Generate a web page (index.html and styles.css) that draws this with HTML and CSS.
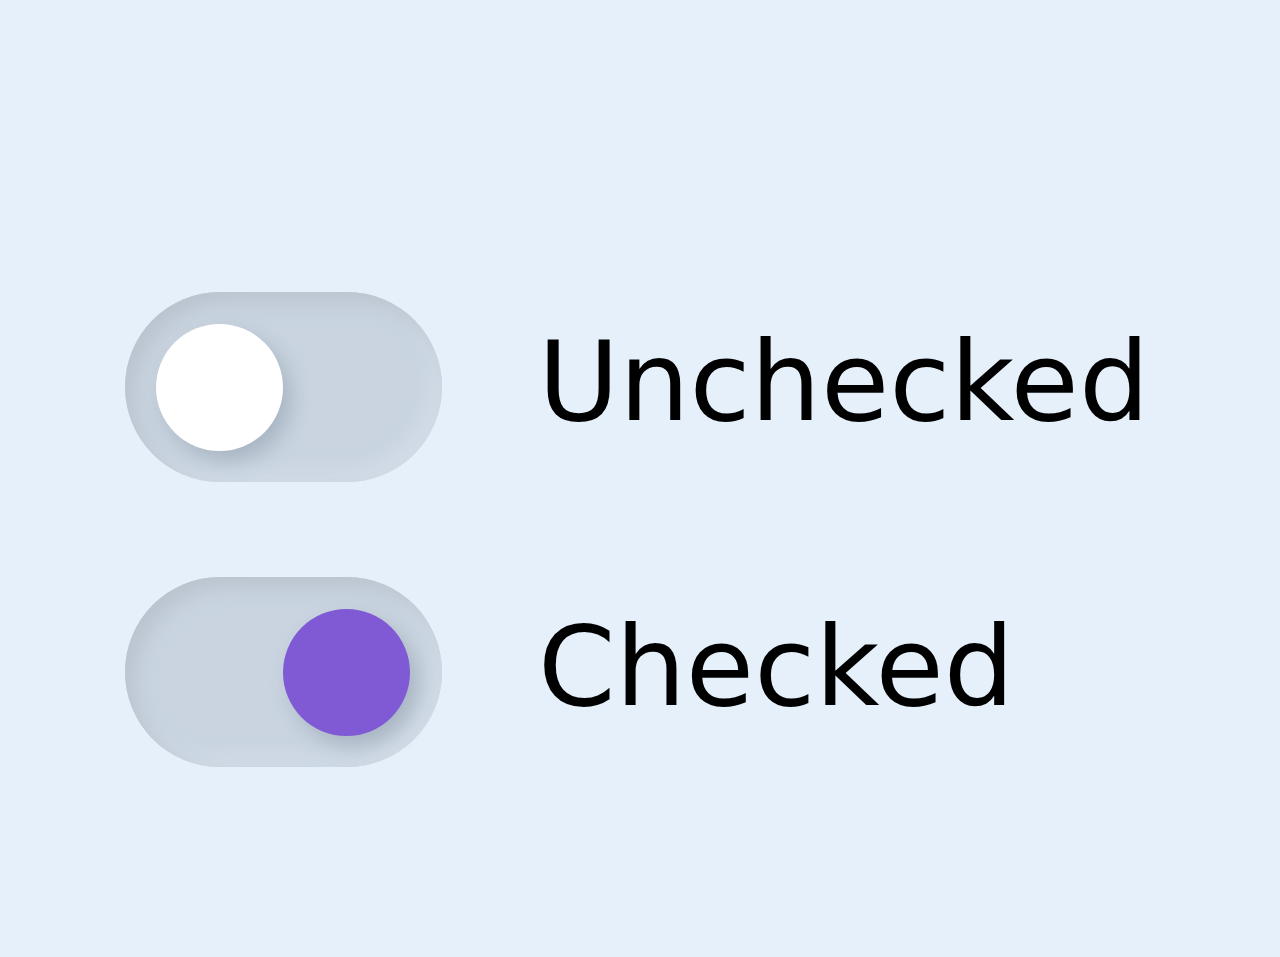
FILE: index.html
```html
<!DOCTYPE html>
<html lang="en">
<head>
<meta charset="utf-8">
<title>Switches</title>
<link rel="stylesheet" href="styles.css">
</head>
<body>
<main class="list">
  <label class="row">
    <span class="track"><span class="knob"></span></span>
    <span class="label">Unchecked</span>
  </label>
  <label class="row">
    <span class="track track-on"><span class="knob knob-on"></span></span>
    <span class="label">Checked</span>
  </label>
</main>
</body>
</html>
```
FILE: styles.css
```css
html, body {
  margin: 0;
  padding: 0;
  background: #e6f0fa;
}
body {
  width: 1280px;
  height: 957px;
  overflow: hidden;
  font-family: "DejaVu Sans", sans-serif;
}
.list {
  display: flex;
  flex-direction: column;
  gap: 95px;
  padding: 292px 0 0 125px;
}
.row {
  display: flex;
  align-items: center;
  gap: 96px;
}
.track {
  width: 317px;
  height: 190px;
  border-radius: 95px;
  background: #c9d4e0;
  box-shadow: inset 10px 10px 20px #bac4cf, inset -10px -10px 20px #d3dde8;
  display: flex;
  align-items: center;
  padding: 0 32px 0 31px;
  box-sizing: border-box;
  flex: none;
}
.track-on {
  justify-content: flex-end;
}
.knob {
  width: 127px;
  height: 127px;
  border-radius: 50%;
  background: #ffffff;
  box-shadow: 8px 10px 20px rgba(120, 135, 150, 0.4);
}
.knob-on {
  background: #805ad5;
}
.label {
  font-size: 111px;
  line-height: 1;
  color: #000;
  margin-top: -12px;
}
```
